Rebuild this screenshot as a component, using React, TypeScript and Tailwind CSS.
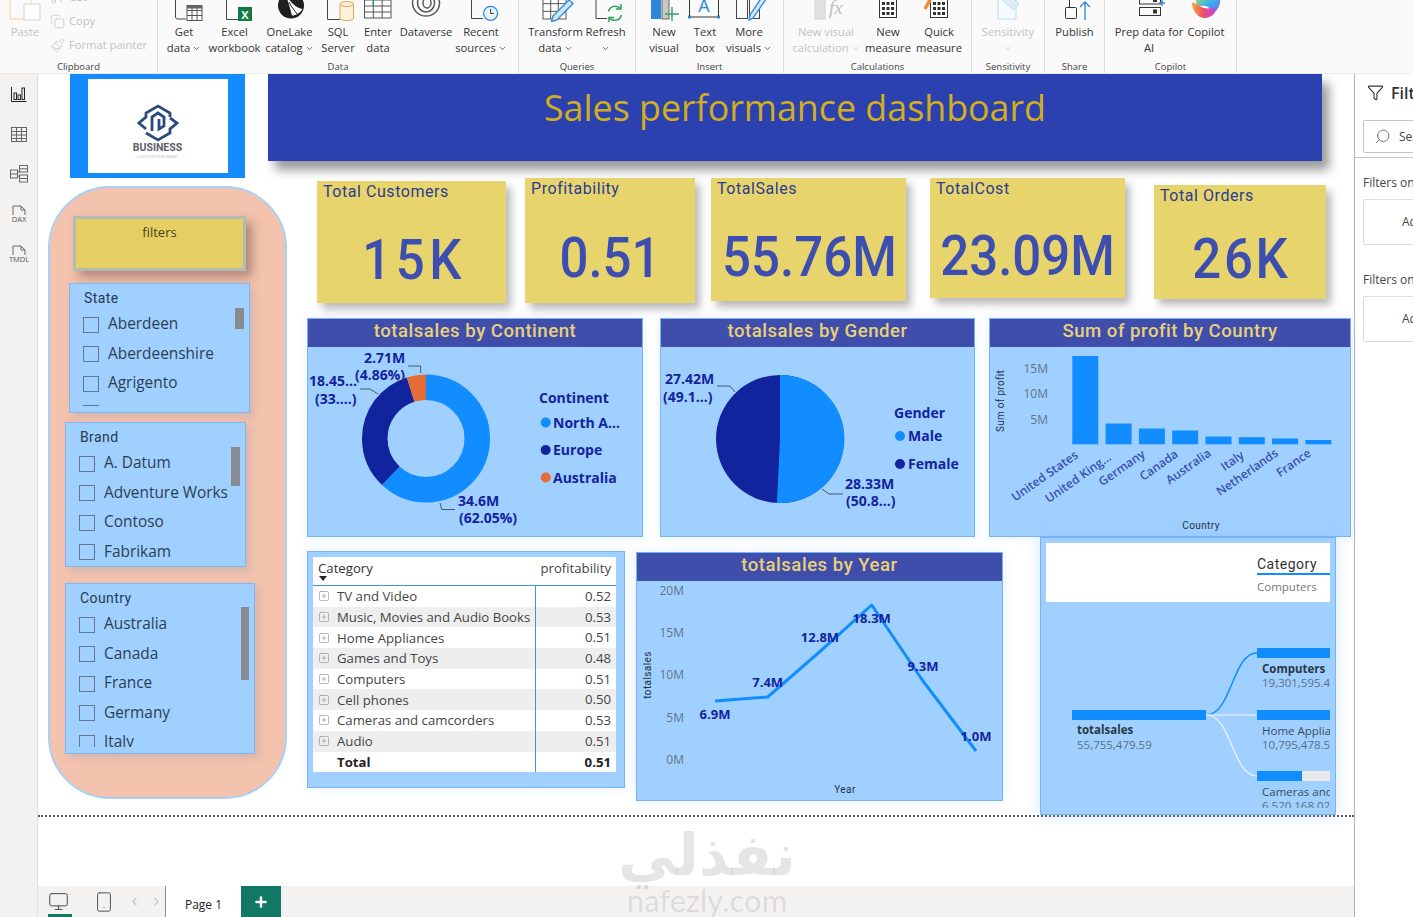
import React from 'react';
import { ChevronDown, ChevronLeft, ChevronRight, Copy, Funnel, Monitor, Paintbrush, Plus, Scissors, Search, Smartphone, SquarePlus } from 'lucide-react';

const din = "font-['Roboto',sans-serif]";
const open = "font-['Open_Sans',sans-serif]";

/* ---------- ribbon icons, all on a 40x22 box centred on the item ---------- */
const Ico = ({ children }: { children: React.ReactNode }) => (
  <svg width="40" height="22" viewBox="0 0 40 22" fill="none" className="block shrink-0">{children}</svg>
);

const Grid = ({ x, y, w, h, cols, rows, stroke = '#555' }: { x: number; y: number; w: number; h: number; cols: number; rows: number; stroke?: string }) => (
  <g stroke={stroke} strokeWidth="1">
    <rect x={x} y={y} width={w} height={h} fill="#fff" />
    {Array.from({ length: cols - 1 }, (_, i) => <line key={i} x1={x + ((i + 1) * w) / cols} x2={x + ((i + 1) * w) / cols} y1={y} y2={y + h} />)}
    {Array.from({ length: rows - 1 }, (_, i) => <line key={i} y1={y + ((i + 1) * h) / rows} y2={y + ((i + 1) * h) / rows} x1={x} x2={x + w} />)}
  </g>
);

const Calc = () => (
  <g>
    <rect x="11.5" y="-3" width="17" height="20.5" fill="#fff" stroke="#333" />
    {[2, 7, 12].map((y) => [14, 18.5, 23].map((x) => <rect key={`${x}-${y}`} x={x} y={y} width="3" height="3" fill="#333" />))}
  </g>
);

const icons: Record<string, React.ReactNode> = {
  paste: <Ico><rect x="5" y="-3" width="21" height="22" rx="1" stroke="#f3dfc0" strokeWidth="1.5" /><rect x="19" y="4" width="16" height="16" fill="#fff" stroke="#cfcfcf" /></Ico>,
  get: <Ico><path d="M11.5 -2V17a2 2 0 0 0 2 2H22" stroke="#444" /><Grid x={23} y={5.5} w={15} h={15} cols={3} rows={3} /><rect x="23" y="5.5" width="15" height="3" fill="#666" /></Ico>,
  excel: <Ico><path d="M11.5 -2V19.5H23" stroke="#444" /><rect x="23" y="7" width="14" height="14" fill="#107c41" /><text x="30" y="18.5" textAnchor="middle" fontSize="11" fontWeight="700" fill="#fff" className={open}>X</text></Ico>,
  lake: <Ico><circle cx="21" cy="5.5" r="13" fill="#1f1f1f" /><path d="M15 -6C21 3 26 8 32.500 9C30 13 26 15.500 22 15.500C20 8 18 0 15 -6Z" fill="#fff" /><path d="M19 2C22 8 25 11 27 14" stroke="#1f1f1f" strokeWidth="1" /></Ico>,
  sql: <Ico><path d="M9.5 -2V19.5H22" stroke="#444" /><path d="M22 4V18a6.7 2.5 0 0 0 13.5 0V4" fill="#fdf0dd" stroke="#e2a54a" /><ellipse cx="28.75" cy="4" rx="6.75" ry="2.5" fill="#fdf0dd" stroke="#e2a54a" /></Ico>,
  enter: <Ico><Grid x={6.5} y={-6} w={26.5} h={24} cols={3} rows={4} /><line x1="15.3" y1="-2" x2="15.3" y2="6" stroke="#2e9e5b" strokeWidth="1.5" /></Ico>,
  verse: <Ico><g stroke="#5b5b5b" strokeWidth="1.5"><ellipse cx="20" cy="3" rx="13.5" ry="13" /><ellipse cx="20" cy="3" rx="8.5" ry="9" /><ellipse cx="21" cy="3" rx="4" ry="5" /></g></Ico>,
  recent: <Ico><path d="M10.5 -2V18.5H22" stroke="#444" /><circle cx="29.6" cy="13.3" r="7" fill="#eaf4fc" stroke="#2b88d8" strokeWidth="1.3" /><path d="M29.6 9v4.5h3.2" stroke="#333" /></Ico>,
  transform: <Ico><Grid x={7} y={-4} w={23} h={23} cols={3} rows={3} /><path d="M33 0l4 3.5L21 20l-5.5 1.5L17 16z" fill="#cfe6fa" stroke="#2b88d8" strokeWidth="1.3" /></Ico>,
  refresh: <Ico><path d="M10 -2V18.5H21" stroke="#444" /><g stroke="#2e9e5b" strokeWidth="1.5"><path d="M22.5 11.5a7 7 0 0 1 12-3" /><path d="M35.5 15a7 7 0 0 1-12 3" /><path d="M35 4v5h-5" /><path d="M23 22v-4.5h5" /></g></Ico>,
  visual: <Ico><rect x="7" y="-2" width="10" height="21" fill="#2b88d8" /><rect x="18" y="-2" width="7" height="21" fill="#c9c9c9" stroke="#666" /><path d="M21 14H35M28 7V21" stroke="#2e9e5b" strokeWidth="1.4" /></Ico>,
  text: <Ico><rect x="4.5" y="-3" width="29" height="20" stroke="#333" /><text x="19" y="12" textAnchor="middle" fontSize="18" fill="#2b88d8" className={open}>A</text><rect x="3" y="15.5" width="3" height="3" fill="#2b88d8" /><rect x="32" y="15.5" width="3" height="3" fill="#2b88d8" /></Ico>,
  more: <Ico><rect x="7.5" y="-2" width="11" height="20.5" stroke="#444" /><rect x="20.5" y="-2" width="10" height="20.5" stroke="#444" /><path d="M33 -3l3.5 3L24 18l-4 2 1-5z" fill="#cfe6fa" stroke="#2b88d8" strokeWidth="1.3" /></Ico>,
  calc: <Ico><rect x="9" y="-1" width="10" height="20" fill="#e2e2e2" stroke="#d2d2d2" /><text x="23" y="14" fontSize="19" fontStyle="italic" fill="#bdbdbd" className="font-['Liberation_Serif',serif]">fx</text></Ico>,
  measure: <Ico><Calc /></Ico>,
  quick: <Ico><Calc /><path d="M12 -2L6 9" stroke="#e8912d" strokeWidth="3.4" /></Ico>,
  sens: <Ico><path d="M10 -4H28V19H10Z" fill="#f6fbff" stroke="#bcdcf0" /><path d="M20 -5L31 4L26 10L15 1Z" fill="#dceefa" stroke="#bcdcf0" /></Ico>,
  publish: <Ico><rect x="10.5" y="7.5" width="11" height="11" rx="1" stroke="#333" /><path d="M14.5 7V-3H25" stroke="#333" /><path d="M30 20V2M25 7l5-5 5 5" stroke="#2b88d8" strokeWidth="1.3" /></Ico>,
  prep: <Ico><rect x="10.5" y="-4" width="21" height="8" stroke="#333" /><rect x="10.5" y="7.5" width="21" height="8" stroke="#333" /><rect x="24" y="-2" width="4" height="4" fill="#333" /><rect x="24" y="9.5" width="4" height="4" fill="#333" /><path d="M33 0v6M30 3h6" stroke="#2b88d8" strokeWidth="1.4" /></Ico>,
  copilot: <Ico><defs><linearGradient id="cpa" x1="0" y1="0" x2="1" y2="1"><stop offset="0" stopColor="#b7d84b" /><stop offset=".45" stopColor="#3bb6e8" /><stop offset="1" stopColor="#7a5af0" /></linearGradient><linearGradient id="cpb" x1="0" y1="0" x2="1" y2="0"><stop offset="0" stopColor="#f7b02c" /><stop offset=".5" stopColor="#ee4c6e" /><stop offset="1" stopColor="#c04ad8" /></linearGradient></defs><path d="M10 -4H34C35 3 33 9 28 13C25 9 21 5 15 6C11 6 9 2 10 -4Z" fill="url(#cpa)" /><path d="M6 3C6 10 10 14 14 17C18 19 24 18 28 14C30 10 28 7 26 8C21 9 16 8 14 6C10 4 8 2 6 3Z" fill="url(#cpb)" /></Ico>,
};

/* ---------- ribbon ---------- */
type Item = { icon: string; lines: string[]; chevron?: boolean; width: string; off?: boolean };

const RibbonItem = ({ icon, lines, chevron, width, off }: Item) => (
  <div className={`flex shrink-0 flex-col items-center ${width} ${off ? 'text-[#c2c2c2]' : 'text-[#333]'}`}>
    {icons[icon]}
    <div className="mt-[2px] flex flex-col items-center text-[11.200px] leading-[16px] whitespace-nowrap">
      {lines.map((l, i) => (
        <span key={i} className="flex h-[16px] items-center gap-[2px]">
          {l}
          {chevron && i === lines.length - 1 && <ChevronDown size={9} strokeWidth={2} />}
        </span>
      ))}
    </div>
  </div>
);

const groups: { label: string; width: string; pad: string; items: Item[] }[] = [
  { label: 'Data', width: 'w-[361px]', pad: 'pl-[2px]', items: [
    { icon: 'get', lines: ['Get', 'data'], chevron: true, width: 'w-[48px]' },
    { icon: 'excel', lines: ['Excel', 'workbook'], width: 'w-[53px]' },
    { icon: 'lake', lines: ['OneLake', 'catalog'], chevron: true, width: 'w-[57px]' },
    { icon: 'sql', lines: ['SQL', 'Server'], width: 'w-[40px]' },
    { icon: 'enter', lines: ['Enter', 'data'], width: 'w-[40px]' },
    { icon: 'verse', lines: ['Dataverse'], width: 'w-[56px]' },
    { icon: 'recent', lines: ['Recent', 'sources'], chevron: true, width: 'w-[54px]' },
  ] },
  { label: 'Queries', width: 'w-[117px]', pad: 'pl-[7px]', items: [
    { icon: 'transform', lines: ['Transform', 'data'], chevron: true, width: 'w-[59px]' },
    { icon: 'refresh', lines: ['Refresh', ''], chevron: true, width: 'w-[41px]' },
  ] },
  { label: 'Insert', width: 'w-[148px]', pad: 'pl-[8px]', items: [
    { icon: 'visual', lines: ['New', 'visual'], width: 'w-[40px]' },
    { icon: 'text', lines: ['Text', 'box'], width: 'w-[42px]' },
    { icon: 'more', lines: ['More', 'visuals'], chevron: true, width: 'w-[46px]' },
  ] },
  { label: 'Calculations', width: 'w-[188px]', pad: 'pl-[8px]', items: [
    { icon: 'calc', lines: ['New visual', 'calculation'], chevron: true, width: 'w-[68px]', off: true },
    { icon: 'measure', lines: ['New', 'measure'], width: 'w-[56px]' },
    { icon: 'quick', lines: ['Quick', 'measure'], width: 'w-[46px]' },
  ] },
  { label: 'Sensitivity', width: 'w-[73px]', pad: 'pl-0', items: [
    { icon: 'sens', lines: ['Sensitivity', ''], chevron: true, width: 'w-[72px]', off: true },
  ] },
  { label: 'Share', width: 'w-[60px]', pad: 'pl-0', items: [
    { icon: 'publish', lines: ['Publish'], width: 'w-[59px]' },
  ] },
  { label: 'Copilot', width: 'w-[132px]', pad: 'pl-[7px]', items: [
    { icon: 'prep', lines: ['Prep data for', 'AI'], width: 'w-[74px]' },
    { icon: 'copilot', lines: ['Copilot'], width: 'w-[40px]' },
  ] },
];

const Ribbon = () => (
  <div className={`flex h-[74px] shrink-0 overflow-hidden border-b border-[#ececec] bg-[#fafafa] ${open}`}>
    <div className="flex h-[74px] w-[158px] shrink-0 flex-col border-r border-[#dcdcdc]">
      <div className="flex h-[61px]">
        <RibbonItem icon="paste" lines={['Paste']} width="w-[50px]" off />
        <div className="-mt-[15px] flex flex-col text-[11.200px] text-[#c2c2c2]">
          {[['Cut', Scissors], ['Copy', Copy], ['Format painter', Paintbrush]].map(([t, I]) => {
            const Icon = I as typeof Copy;
            return (
              <div key={t as string} className="flex h-[24px] items-center gap-[4px] whitespace-nowrap">
                <Icon size={15} strokeWidth={1.2} />
                {t as string}
              </div>
            );
          })}
        </div>
      </div>
      <div className="text-center text-[9.5px] leading-[14px] text-[#444]">Clipboard</div>
    </div>
    {groups.map((g) => (
      <div key={g.label} className={`flex h-[74px] shrink-0 flex-col border-r border-[#dcdcdc] ${g.width}`}>
        <div className={`flex h-[61px] ${g.pad}`}>
          {g.items.map((it) => <RibbonItem key={it.icon} {...it} />)}
        </div>
        <div className="text-center text-[9.5px] leading-[14px] text-[#444]">{g.label}</div>
      </div>
    ))}
  </div>
);

/* ---------- left rail ---------- */
const FileTag = ({ label }: { label: string }) => (
  <svg width="22" height="20" viewBox="0 0 22 20" fill="none">
    <path d="M5 11V2H13L17 6V11M13 2V6H17" stroke="#666" />
    <text x="11" y="18" textAnchor="middle" fontSize="7.500" fill="#555" className={open}>{label}</text>
  </svg>
);

const LeftRail = () => (
  <div className="flex w-[38px] shrink-0 flex-col items-center gap-[20px] border-r border-[#e1dfdd] bg-[#f3f2f1] pt-[10px]">
    <svg width="20" height="20" viewBox="0 0 20 20" fill="none" stroke="#222"><path d="M2.5 3V17.5H17.5" /><rect x="5" y="9" width="2.5" height="6.5" /><rect x="9" y="11" width="2.5" height="4.5" /><rect x="13" y="4" width="2.5" height="11.5" /></svg>
    <svg width="20" height="20" viewBox="0 0 20 20" fill="none" stroke="#666"><rect x="2.5" y="3.5" width="15" height="14" /><path d="M2.5 7.5H17.5M2.5 11H17.5M2.5 14.500H17.500M7.500 3.500V17.500M12.500 3.500V17.500" /></svg>
    <svg width="20" height="20" viewBox="0 0 20 20" fill="none" stroke="#666"><rect x="1.500" y="6" width="7" height="8" /><path d="M1.500 10H8.500" /><rect x="10.500" y="1.500" width="8" height="6.500" /><path d="M10.500 4.800H18.500" /><rect x="10.500" y="11" width="8" height="7" /><path d="M10.500 14.500H18.500M8.500 8H10.500M8.500 12H10.500" /></svg>
    <FileTag label="DAX" />
    <FileTag label="TMDL" />
  </div>
);

/* ---------- report canvas ---------- */
const Logo = () => (
  <div className="ml-[32px] flex h-[104px] w-[175px] justify-center bg-[#148cff] pt-[5px]">
    <div className="flex h-[94px] w-[140px] flex-col items-center bg-white pt-[25px]">
      <svg width="42" height="38" viewBox="0 0 42 38" fill="none" stroke="#2d4a80" strokeWidth="2.8" strokeLinejoin="miter">
        <path d="M33 13V9L21 2L9 9V13L2 19L9 25" />
        <path d="M9 29L21 36L33 29V25L40 19L33 14" />
        <path d="M15 27V13L21 9L27 13V22L22 25V15" />
      </svg>
      <span className={`-mt-[1px] text-[10.500px] leading-[13px] font-bold text-[#5c6068] ${din}`}>BUSINESS</span>
      <span className="text-[3.500px] leading-[5px] text-[#b8b8b8]">LOGO FOR YOUR BRAND</span>
    </div>
  </div>
);

const Slicer = ({ title, items, className, listClass, barClass }: { title: string; items: string[]; className: string; listClass: string; barClass: string }) => (
  <div className={`relative border border-[#7db6f0] bg-[#a0d0ff] pl-[13px] shadow-[4px_4px_8px_rgba(120,140,170,0.25)] ${className}`}>
    <div className={`h-[26px] pt-[5px] pl-px text-[14px] leading-[18px] tracking-[0.4px] text-[#263b4d] ${din}`}>{title}</div>
    <div className={`overflow-hidden ${listClass}`}>
      {items.map((s) => (
        <div key={s} className="flex h-[29.500px] items-center gap-[9px] text-[15.400px] leading-[20px] whitespace-nowrap text-[#2b3f52]">
          <span className="h-[16px] w-[16px] shrink-0 border border-[#62788c]" />
          <span className="-mt-px">{s}</span>
        </div>
      ))}
    </div>
    <div className={`absolute bg-[#888b92] ${barClass}`} />
  </div>
);

const FilterPanel = () => (
  <div className="mt-[8px] ml-[10px] flex h-[613px] w-[239px] shrink-0 flex-col rounded-[62px] border-2 border-[#a9cff6] bg-[#f4c3ae]">
    <div className="mt-[28px] ml-[23px] h-[55px] w-[173px] border-[3px] border-[#b3bcb4] bg-[#e6cf62] pt-[4px] text-center text-[13px] leading-[18px] text-[#4a3f1c] shadow-[6px_6px_10px_rgba(90,60,50,0.45)]">filters</div>
    <Slicer title="State" items={['Aberdeen', 'Aberdeenshire', 'Agrigento', 'Aachen']} className="mt-[12px] ml-[19px] h-[130px] w-[181px]" listClass="h-[96px]" barClass="top-[24px] right-[5px] h-[21px] w-[9px]" />
    <Slicer title="Brand" items={['A. Datum', 'Adventure Works', 'Contoso', 'Fabrikam']} className="mt-[9px] ml-[15px] h-[145px] w-[181px]" listClass="h-[118px]" barClass="top-[24px] right-[5px] h-[39px] w-[9px]" />
    <Slicer title="Country" items={['Australia', 'Canada', 'France', 'Germany', 'Italy']} className="mt-[16px] ml-[15px] h-[171px] w-[190px]" listClass="h-[137px]" barClass="top-[23px] right-[5px] h-[73px] w-[8px]" />
  </div>
);

const kpis = [
  { title: 'Total Customers', value: '15K', card: 'mt-[3px] ml-[30px] h-[122px] w-[189px]', val: 'mt-[29px] pl-[6px] tracking-[5px]' },
  { title: 'Profitability', value: '0.51', card: 'ml-[19px] h-[125px] w-[170px]', val: 'mt-[30px]' },
  { title: 'TotalSales', value: '55.76M', card: 'ml-[16px] h-[123px] w-[195px]', val: 'mt-[29px] pl-[2px]' },
  { title: 'TotalCost', value: '23.09M', card: 'ml-[24px] h-[120px] w-[195px]', val: 'mt-[28px]' },
  { title: 'Total Orders', value: '26K', card: 'mt-[7px] ml-[29px] h-[114px] w-[172px]', val: 'mt-[24px] pl-[3px] tracking-[3px]' },
];

const Kpi = ({ title, value, card, val }: { title: string; value: string; card: string; val: string }) => (
  <div className={`shrink-0 bg-[#e8d46c] shadow-[5px_6px_8px_rgba(0,0,0,0.28)] ${din} ${card}`}>
    <div className="h-[20px] pt-px pl-[6px] text-[16px] leading-[20px] tracking-[0.55px] whitespace-nowrap text-[#2c3c8f]">{title}</div>
    <div className={`scale-x-[0.91] text-center text-[56px] leading-[60px] font-medium text-[#3c4eb0] ${val}`}>{value}</div>
  </div>
);

const ChartPanel = ({ title, className, children }: { title: string; className: string; children: React.ReactNode }) => (
  <div className={`shrink-0 border border-[#79b4f0] bg-[#a0d0ff] shadow-[0_0_10px_rgba(120,180,250,0.2)] ${className}`}>
    <div className={`h-[28px] bg-[#3f4dab] text-center text-[18.600px] leading-[25px] font-medium tracking-[0.5px] text-[#e9d07a] ${din}`}>{title}</div>
    {children}
  </div>
);

const Lbl = ({ x, y, anchor = 'start', size = 14, children }: { x: number; y: number; anchor?: 'start' | 'middle' | 'end'; size?: number; children: React.ReactNode }) => (
  <text x={x} y={y} textAnchor={anchor} fontSize={size} fontWeight="700" fill="#12239e" className={open}>{children}</text>
);

const Continent = () => (
  <ChartPanel title="totalsales by Continent" className="ml-[20px] h-[219px] w-[336px]">
    <svg width="334" height="189" viewBox="308 347 334 189" fill="none" className="block">
      <g transform="rotate(-90 426 438.500)" strokeWidth="25.500">
        <circle cx="426" cy="438.500" r="51.250" pathLength="100" stroke="#118dff" strokeDasharray="62.05 100" />
        <circle cx="426" cy="438.500" r="51.250" pathLength="100" stroke="#12239e" strokeDasharray="33.09 100" strokeDashoffset="-62.05" />
        <circle cx="426" cy="438.500" r="51.250" pathLength="100" stroke="#e66c37" strokeDasharray="4.86 100" strokeDashoffset="-95.14" />
      </g>
      <g stroke="#44566a">
        <path d="M408 366H420.700V373" />
        <path d="M360 389H370L378 394" />
        <path d="M440 503L441.700 509.500H455" />
      </g>
      <Lbl x={364} y={363}>2.71M</Lbl>
      <Lbl x={355} y={380}>(4.86%)</Lbl>
      <Lbl x={309} y={386}>18.45...</Lbl>
      <Lbl x={315} y={404}>(33....)</Lbl>
      <Lbl x={458} y={506}>34.6M</Lbl>
      <Lbl x={459} y={523}>(62.05%)</Lbl>
      <Lbl x={539} y={403}>Continent</Lbl>
      <circle cx="545.700" cy="422.500" r="5" fill="#118dff" />
      <Lbl x={553} y={428}>North A...</Lbl>
      <circle cx="545.700" cy="450" r="5" fill="#12239e" />
      <Lbl x={553} y={455}>Europe</Lbl>
      <circle cx="545.700" cy="477.500" r="5" fill="#e66c37" />
      <Lbl x={553} y={483}>Australia</Lbl>
    </svg>
  </ChartPanel>
);

const Gender = () => (
  <ChartPanel title="totalsales by Gender" className="ml-[17px] h-[219px] w-[315px]">
    <svg width="313" height="189" viewBox="661 347 313 189" fill="none" className="block">
      <circle cx="780" cy="439" r="64" fill="#12239e" />
      <path d="M780 439V375A64 64 0 1 1 776.900 502.900Z" fill="#118dff" />
      <g stroke="#44566a">
        <path d="M717 386H730L735 392" />
        <path d="M822 489L829 494H843" />
      </g>
      <Lbl x={665} y={384}>27.42M</Lbl>
      <Lbl x={663} y={402}>(49.1...)</Lbl>
      <Lbl x={845} y={489}>28.33M</Lbl>
      <Lbl x={846} y={506}>(50.8...)</Lbl>
      <Lbl x={894} y={418}>Gender</Lbl>
      <circle cx="900" cy="436" r="5" fill="#118dff" />
      <Lbl x={908} y={441}>Male</Lbl>
      <circle cx="900" cy="464" r="5" fill="#12239e" />
      <Lbl x={908} y={469}>Female</Lbl>
    </svg>
  </ChartPanel>
);

const profit = [
  { n: 'United States', top: 356, end: [1079, 457] },
  { n: 'United King...', top: 423.500, end: [1112, 459] },
  { n: 'Germany', top: 428.500, end: [1146, 456] },
  { n: 'Canada', top: 430.500, end: [1179, 456] },
  { n: 'Australia', top: 436.500, end: [1212, 455] },
  { n: 'Italy', top: 437.200, end: [1245, 457] },
  { n: 'Netherlands', top: 438.500, end: [1279, 455] },
  { n: 'France', top: 440, end: [1312, 455] },
];

const Profit = () => (
  <ChartPanel title="Sum of profit by Country" className="ml-[14px] h-[219px] w-[362px]">
    <svg width="360" height="189" viewBox="990 347 360 189" fill="none" className="block">
      {[['15M', 373], ['10M', 398], ['5M', 424]].map(([t, y]) => (
        <text key={t} x={1048} y={y} textAnchor="end" fontSize="12" fill="#607489" className={open}>{t}</text>
      ))}
      <text transform="translate(1004 401) rotate(-90)" textAnchor="middle" fontSize="10" letterSpacing=".3" fill="#1f3044" className={din}>Sum of profit</text>
      {profit.map((b, i) => (
        <g key={b.n}>
          <rect x={1072.300 + i * 33.300} y={b.top} width="26" height={444.300 - b.top} fill="#118dff" />
          <text transform={`translate(${b.end[0]} ${b.end[1]}) rotate(-35)`} textAnchor="end" fontSize="12" fontWeight="600" fill="#3a50b0" className={open}>{b.n}</text>
        </g>
      ))}
      <text x={1201} y={529} textAnchor="middle" fontSize="10" letterSpacing=".4" fill="#1f3044" className={din}>Country</text>
    </svg>
  </ChartPanel>
);

const tableRows: [string, string][] = [
  ['TV and Video', '0.52'],
  ['Music, Movies and Audio Books', '0.53'],
  ['Home Appliances', '0.51'],
  ['Games and Toys', '0.48'],
  ['Computers', '0.51'],
  ['Cell phones', '0.50'],
  ['Cameras and camcorders', '0.53'],
  ['Audio', '0.51'],
];

const CategoryTable = () => (
  <div className="mt-[14px] ml-[20px] h-[237px] w-[318px] shrink-0 border border-[#79b4f0] bg-[#a0d0ff] pt-[5px] pl-[5px] shadow-[0_0_10px_rgba(120,180,250,0.2)]">
    <div className="w-[303px] bg-white text-[13.200px] text-[#444]">
      <div className="flex h-[29px] border-b border-[#3d96d8] pr-[5px] pl-[5px]">
        <div className="relative flex-1 pt-[2px] leading-[18px] text-[#333]">
          Category
          <span className="absolute top-[19px] left-[1px] h-0 w-0 border-x-[4px] border-t-[5px] border-x-transparent border-t-[#222]" />
        </div>
        <div className="pt-[2px] leading-[18px]">profitability</div>
      </div>
      {tableRows.map(([name, v], i) => (
        <div key={name} className={`flex h-[20.700px] leading-[20px] ${i % 2 ? 'bg-[#eeeeee]' : 'bg-white'}`}>
          <div className="flex flex-1 items-center gap-[5px] pl-[5px] whitespace-nowrap">
            <SquarePlus size={12} strokeWidth={1.200} className="text-[#8c8c8c]" />
            <span className="ml-[2px]">{name}</span>
          </div>
          <div className="w-[81px] border-l border-[#3d96d8] pr-[5px] text-right">{v}</div>
        </div>
      ))}
      <div className="flex h-[20px] leading-[20px] font-bold text-[#222]">
        <div className="flex-1 pl-[24px]">Total</div>
        <div className="w-[81px] border-l border-[#3d96d8] pr-[5px] text-right">0.51</div>
      </div>
    </div>
  </div>
);

const yearPts: [number, number, string, number][] = [
  [715, 701, '6.9M', 719],
  [767.700, 697, '7.4M', 687],
  [820, 651.500, '12.8M', 642],
  [871.700, 605, '18.3M', 623],
  [923, 681, '9.3M', 671],
  [976, 751, '1.0M', 741],
];

const YearChart = () => (
  <ChartPanel title="totalsales by Year" className="mt-[15px] ml-[11px] h-[249px] w-[367px]">
    <svg width="365" height="219" viewBox="637 581 365 219" fill="none" className="block">
      {[['20M', 595], ['15M', 637], ['10M', 679], ['5M', 722], ['0M', 764]].map(([t, y]) => (
        <text key={t} x={684} y={y} textAnchor="end" fontSize="12" fill="#607489" className={open}>{t}</text>
      ))}
      <text transform="translate(651 675) rotate(-90)" textAnchor="middle" fontSize="10" letterSpacing=".4" fill="#1f3044" className={din}>totalsales</text>
      <polyline points={yearPts.map((p) => `${p[0]},${p[1]}`).join(' ')} stroke="#118dff" strokeWidth="3" strokeLinejoin="round" />
      {yearPts.map((p) => <Lbl key={p[2]} x={p[0]} y={p[3]} anchor="middle" size={13}>{p[2]}</Lbl>)}
      <text x={845} y={793} textAnchor="middle" fontSize="10" letterSpacing=".4" fill="#1f3044" className={din}>Year</text>
    </svg>
  </ChartPanel>
);

const treeNodes = [
  { y: 648, fill: 73, name: 'Computers', bold: true, val: '19,301,595.4', clip: 33 },
  { y: 710, fill: 73, name: 'Home Appliances', bold: false, val: '10,795,478.5', clip: 33 },
  { y: 771, fill: 45, name: 'Cameras and camcorders', bold: false, val: '6,520,168.02', clip: 25 },
];

const Decomp = () => (
  <div className="ml-[37px] h-[278px] w-[296px] shrink-0 overflow-hidden border border-[#79b4f0] bg-[#a0d0ff] px-[5px] pt-[5px] shadow-[0_0_14px_rgba(120,180,250,0.35)]">
    <div className="flex h-[59px] w-[284px] justify-end bg-white">
      <div className="w-[73px] pt-[12px]">
        <div className={`h-[20px] border-b-2 border-[#118dff] text-[14px] leading-[18px] tracking-[0.5px] text-[#333] ${din}`}>Category</div>
        <div className="pt-[3px] text-[11.500px] leading-[18px] text-[#777]">Computers</div>
      </div>
    </div>
    <svg width="284" height="212" viewBox="1046 602 284 212" fill="none" className="block">
      <path d="M1206 715C1232 715 1232 653 1257 653" stroke="#118dff" strokeWidth="1.500" />
      <path d="M1206 715H1257" stroke="#eef6ff" strokeWidth="1.200" />
      <path d="M1206 715C1232 715 1232 776 1257 776" stroke="#eef6ff" strokeWidth="1.200" />
      <rect x="1072" y="710" width="134" height="10" fill="#118dff" />
      <text x="1077" y="734" fontSize="11.500" fontWeight="700" fill="#2a3744" className={open}>totalsales</text>
      <text x="1077" y="749" fontSize="11.500" fill="#5c6f82" className={open}>55,755,479.59</text>
      {treeNodes.map((n) => (
        <g key={n.name}>
          <rect x="1257" y={n.y} width="73" height="10" fill="#e8e8e8" />
          <rect x="1257" y={n.y} width={n.fill} height="10" fill="#118dff" />
          <svg x="1262" y={n.y + 12} width="68" height={n.clip} viewBox={`1262 ${n.y + 12} 68 ${n.clip}`}>
            <text x="1262" y={n.y + 25} fontSize="11.500" fontWeight={n.bold ? 700 : 400} fill={n.bold ? '#2a3744' : '#3b4b5b'} className={open}>{n.name}</text>
            <text x="1262" y={n.y + 39} fontSize="11.500" fill="#5c6f82" className={open}>{n.val}</text>
          </svg>
        </g>
      ))}
    </svg>
  </div>
);

const Canvas = () => (
  <div className="flex h-[743px] shrink-0 border-b-2 border-dotted border-[#555]">
    <div className="flex w-[249px] shrink-0 flex-col">
      <Logo />
      <FilterPanel />
    </div>
    <div className="flex w-[1067px] shrink-0 flex-col">
      <div className="-ml-[19px] h-[87px] w-[1054px] shrink-0 bg-[#2b41b0] pt-[8px] text-center text-[35.800px] leading-[50px] font-normal text-[#d2ae1e] shadow-[7px_9px_10px_rgba(0,0,0,0.4)]">
        Sales performance dashboard
      </div>
      <div className="mt-[17px] flex h-[125px] shrink-0 items-start">
        {kpis.map((k) => <Kpi key={k.title} {...k} />)}
      </div>
      <div className="mt-[15px] flex h-[219px] shrink-0">
        <Continent />
        <Gender />
        <Profit />
      </div>
      <div className="flex h-[278px] shrink-0 items-start">
        <CategoryTable />
        <YearChart />
        <Decomp />
      </div>
    </div>
  </div>
);

const BottomBar = () => (
  <div className="flex h-[31px] shrink-0 bg-[#f3f2f1]">
    <div className="relative flex w-[128px] shrink-0 items-center border-r border-[#8a8a8a] pl-[10px]">
      <Monitor size={21} strokeWidth={1.1} className="text-[#444]" />
      <span className="absolute bottom-0 left-[10px] h-[3px] w-[24px] bg-[#117865]" />
      <Smartphone size={22} strokeWidth={1} className="ml-[24px] text-[#444]" />
      <ChevronLeft size={13} className="ml-[13px] text-[#c4c4c4]" />
      <ChevronRight size={13} className="ml-[9px] text-[#c4c4c4]" />
    </div>
    <div className="flex w-[75px] items-center justify-center bg-white pt-[6px] text-[12px] text-[#222]">Page 1</div>
    <div className="flex w-[40px] items-center justify-center bg-[#117865] text-white">
      <Plus size={16} strokeWidth={3.500} />
    </div>
  </div>
);

const RightPane = () => (
  <div className="w-[59px] shrink-0 overflow-hidden border-l border-[#b3b3b3] bg-white text-[12px] text-[#444]">
    <div className="flex h-[46px] w-[160px] items-start gap-[7px] pt-[7px] pl-[12px] text-[16px] leading-[24px] font-semibold text-[#333]">
      <Funnel size={17} strokeWidth={1.600} className="mt-[3px]" />
      Filters
    </div>
    <div className="ml-[8px] flex h-[33px] w-[160px] items-center gap-[8px] rounded-[2px] border border-[#c8c6c4] pl-[10px] text-[#444]">
      <Search size={17} strokeWidth={1} className="-scale-x-100" />
      Search
    </div>
    <div className="mt-[4px] h-px w-full bg-[#c8c6c4]" />
    <div className="mt-[16px] ml-[8px] leading-[18px] whitespace-nowrap">Filters on this page</div>
    <div className="mt-[7px] ml-[8px] flex h-[46px] w-[160px] items-center rounded-[2px] border border-[#dedcda] pl-[38px] whitespace-nowrap">Add data fields here</div>
    <div className="mt-[26px] ml-[8px] leading-[18px] whitespace-nowrap">Filters on all pages</div>
    <div className="mt-[7px] ml-[8px] flex h-[46px] w-[160px] items-center rounded-[2px] border border-[#dedcda] pl-[38px] whitespace-nowrap">Add data fields here</div>
  </div>
);

export default function App() {
  return (
    <div className={`flex h-[917px] w-[1413px] flex-col overflow-hidden bg-white ${open}`}>
      <Ribbon />
      <div className="flex min-h-0 flex-1">
        <LeftRail />
        <div className="relative flex w-[1316px] shrink-0 flex-col">
          <Canvas />
          <div className="flex-1" />
          <BottomBar />
          {/* watermark over the page */}
          <div className="pointer-events-none absolute top-[745px] left-[584px] flex w-[170px] flex-col items-center text-[#000]/10">
            <span dir="rtl" className="font-['DejaVu_Sans',sans-serif] text-[58px] leading-[72px] font-bold">نفذلي</span>
            <span className="-mt-[8px] font-['Lato',sans-serif] text-[31px] leading-[34px] font-normal whitespace-nowrap">nafezly.com</span>
          </div>
        </div>
        <RightPane />
      </div>
    </div>
  );
}
